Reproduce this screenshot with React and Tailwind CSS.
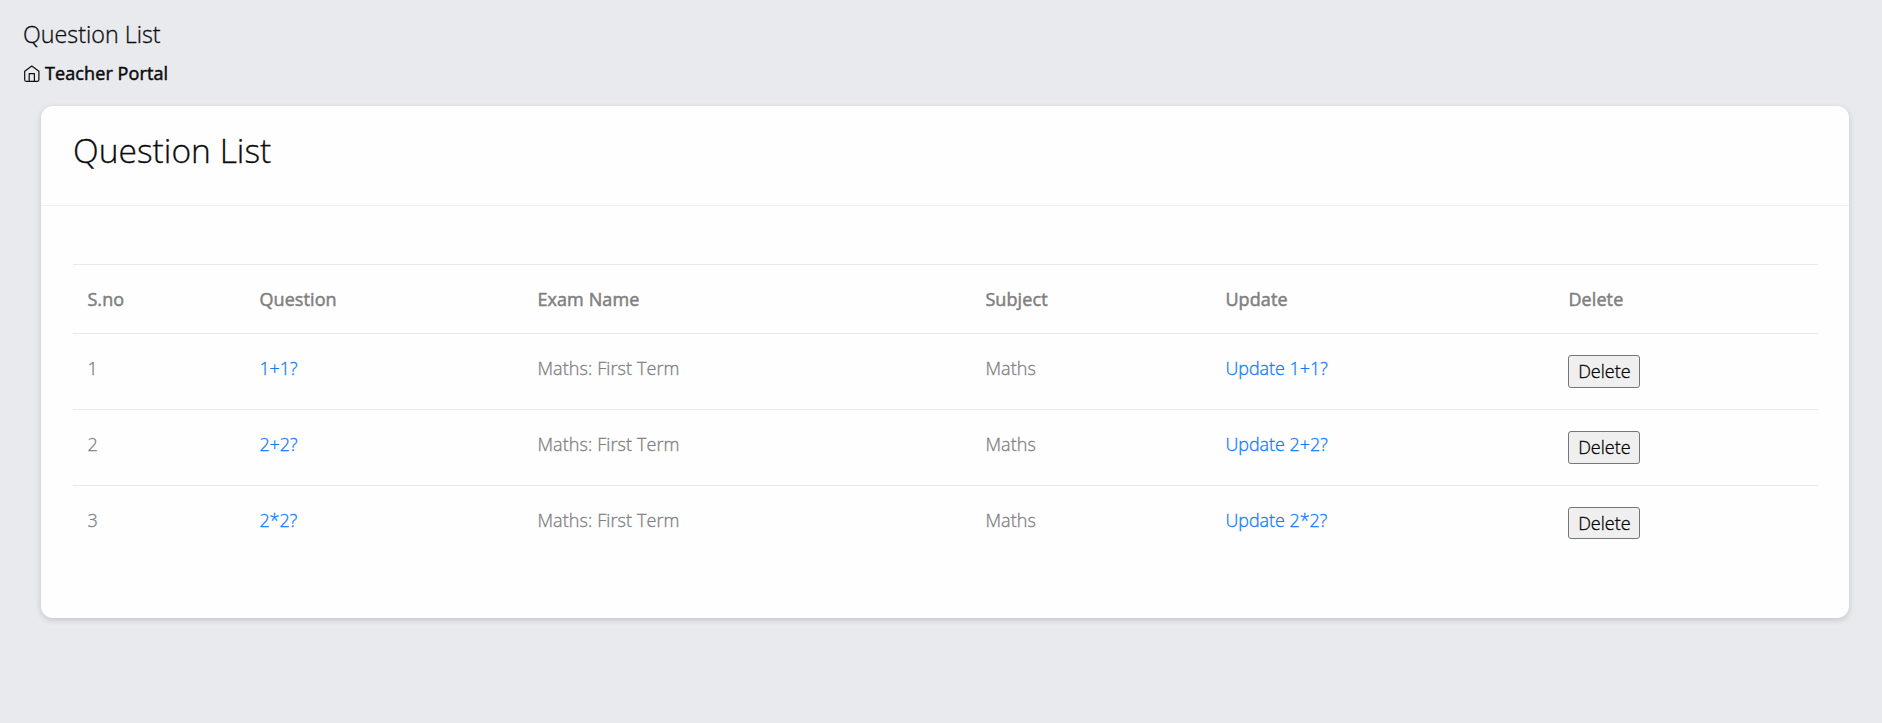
const questions = [
  { id: 1, text: '1+1?', exam: 'Maths: First Term', subject: 'Maths', buttonHeight: 'h-[33px]' },
  { id: 2, text: '2+2?', exam: 'Maths: First Term', subject: 'Maths', buttonHeight: 'h-[33px]' },
  { id: 3, text: '2*2?', exam: 'Maths: First Term', subject: 'Maths', buttonHeight: 'h-8' },
];

const grid =
  'grid grid-cols-[172px_278px_448px_240px_343px_1fr] border-t border-[#e9e9ea] pl-[14.4px] pt-[21px] leading-[26px]';

function HomeIcon() {
  return (
    <svg className="h-[17px] w-4" viewBox="0 0 16 17" fill="none" stroke="currentColor" strokeWidth="1.2" strokeLinejoin="round">
      <path d="M.7 6.2 7.8 1l7.1 5.2v8.6c0 .9-.6 1.5-1.5 1.5H2.2c-.9 0-1.5-.6-1.5-1.5Z" />
      <path d="M5.2 16.3V8.7h5.2v7.6" />
    </svg>
  );
}

export default function App() {
  return (
    <main className="flex min-h-screen flex-col bg-[#e9eaee] font-['Open_Sans',sans-serif] text-[18px] font-light text-[#808080] [-webkit-text-stroke:0.3px_currentColor]">
      <header className="flex flex-col pl-6 pt-[17px] text-[#0c0c0d]">
        <h2 className="-ml-px text-[23.3px] leading-[34px]">Question List</h2>
        <div className="mt-[9px] flex h-[26px] items-center gap-[5px] leading-[26px]">
          <HomeIcon />
          <span className="font-normal tracking-[0.1px] [-webkit-text-stroke:0.5px_currentColor]">Teacher Portal</span>
        </div>
      </header>
      <section className="ml-[41px] mt-5 h-[512px] w-[1808px] rounded-xl bg-[#fefefe] shadow-[0_2px_6px_rgba(0,0,0,0.16)]">
        <div className="h-[100px] border-b border-[#f0f0f1] px-8 pt-[21px]">
          <h1 className="text-[33.6px] leading-[46px] text-[#0c0c0d]">Question List</h1>
        </div>
        <div className="pl-8 pr-[31px] pt-[58px]">
          <div className={`${grid} h-[69px] font-normal tracking-[0.1px] [-webkit-text-stroke:0.5px_currentColor]`}>
            <div>S.no</div>
            <div>Question</div>
            <div>Exam Name</div>
            <div>Subject</div>
            <div>Update</div>
            <div>Delete</div>
          </div>
          {questions.map((q) => (
            <div key={q.id} className={`${grid} h-[76px]`}>
              <div>{q.id}</div>
              <div><a className="text-[17.9px] text-[#0f7bff]">{q.text}</a></div>
              <div className="tracking-[0.1px]">{q.exam}</div>
              <div className="tracking-[0.1px]">{q.subject}</div>
              <div><a className="text-[17.9px] text-[#0f7bff]">Update {q.text}</a></div>
              <div>
                <button className={`${q.buttonHeight} flex w-[72px] items-start justify-center rounded-[3px] border border-[#767676] bg-[#efefef] pt-0.5 text-black`}>
                  Delete
                </button>
              </div>
            </div>
          ))}
        </div>
      </section>
    </main>
  );
}
